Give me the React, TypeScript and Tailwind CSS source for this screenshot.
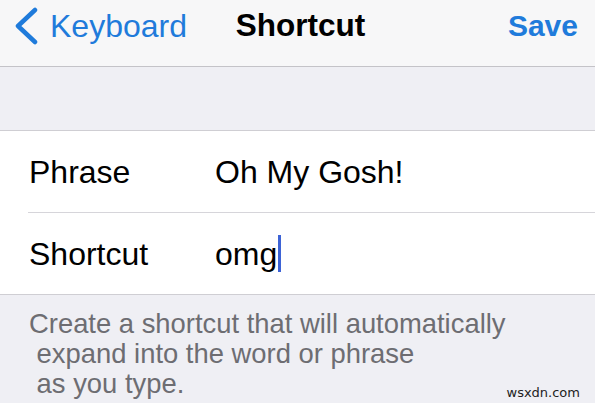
import React, { useState } from "react";

const BLUE = "text-[#1f7bdb]";

function BackChevron() {
  return (
    <svg width="26" height="38" viewBox="0 0 26 38" className="shrink-0">
      <polyline
        points="22,3 5,19 22,35"
        fill="none"
        stroke="#1f7bdb"
        strokeWidth="4.5"
        strokeLinecap="round"
        strokeLinejoin="round"
      />
    </svg>
  );
}

const App: React.FC = () => {
  const [phrase] = useState("Oh My Gosh!");
  const [shortcut] = useState("omg");

  return (
    <div
      className="relative w-[600px] h-[403px] overflow-hidden bg-white pr-[5px]"
      style={{ fontFamily: '"Liberation Sans", Arial, sans-serif' }}
    >
      <div className="h-full bg-[#efeff4] flex flex-col">
        {/* navigation bar */}
        <div className="h-[67px] shrink-0 bg-[#f7f7f8] border-b border-[#c4c3c8] grid grid-cols-[1fr_auto_1fr] items-center pb-[14px]">
          <button type="button" className={`flex items-center pl-[13px] ${BLUE}`}>
            <BackChevron />
            <span className="ml-[11px] text-[32px] leading-none">Keyboard</span>
          </button>
          <h1 className="ml-[6px] text-[31.5px] font-bold text-black leading-none">Shortcut</h1>
          <button
            type="button"
            className={`justify-self-end pr-[17px] text-[30px] font-bold leading-none ${BLUE}`}
          >
            Save
          </button>
        </div>

        <div className="h-[64px] shrink-0 border-b border-[#cfced3]" />

        {/* text fields */}
        <div className="bg-white border-b border-[#cfced3] text-[32px] text-black">
          <div className="h-[81px] flex items-center pl-[29px]">
            <span className="w-[186px]">Phrase</span>
            <span>{phrase}</span>
          </div>
          <div className="ml-[28px] border-t border-[#d6d5da]" />
          <div className="h-[81px] flex items-center pl-[29px]">
            <span className="w-[186px]">Shortcut</span>
            <span>{shortcut}</span>
            <span className="ml-[1px] w-[3px] h-[37px] bg-[#3d63d6]" />
          </div>
        </div>

        <p className="pt-[14px] pl-[29px] text-[27.4px] leading-[30px] text-[#6d6d72]">
          Create a shortcut that will automatically
          <br />
          &nbsp;expand into the word or phrase
          <br />
          &nbsp;as you type.
        </p>
      </div>

      <span
        className="absolute right-[20px] bottom-[1px] text-[13px] text-[#222]"
        style={{ fontFamily: '"DejaVu Sans", sans-serif' }}
      >
        wsxdn.com
      </span>
    </div>
  );
};

export default App;
